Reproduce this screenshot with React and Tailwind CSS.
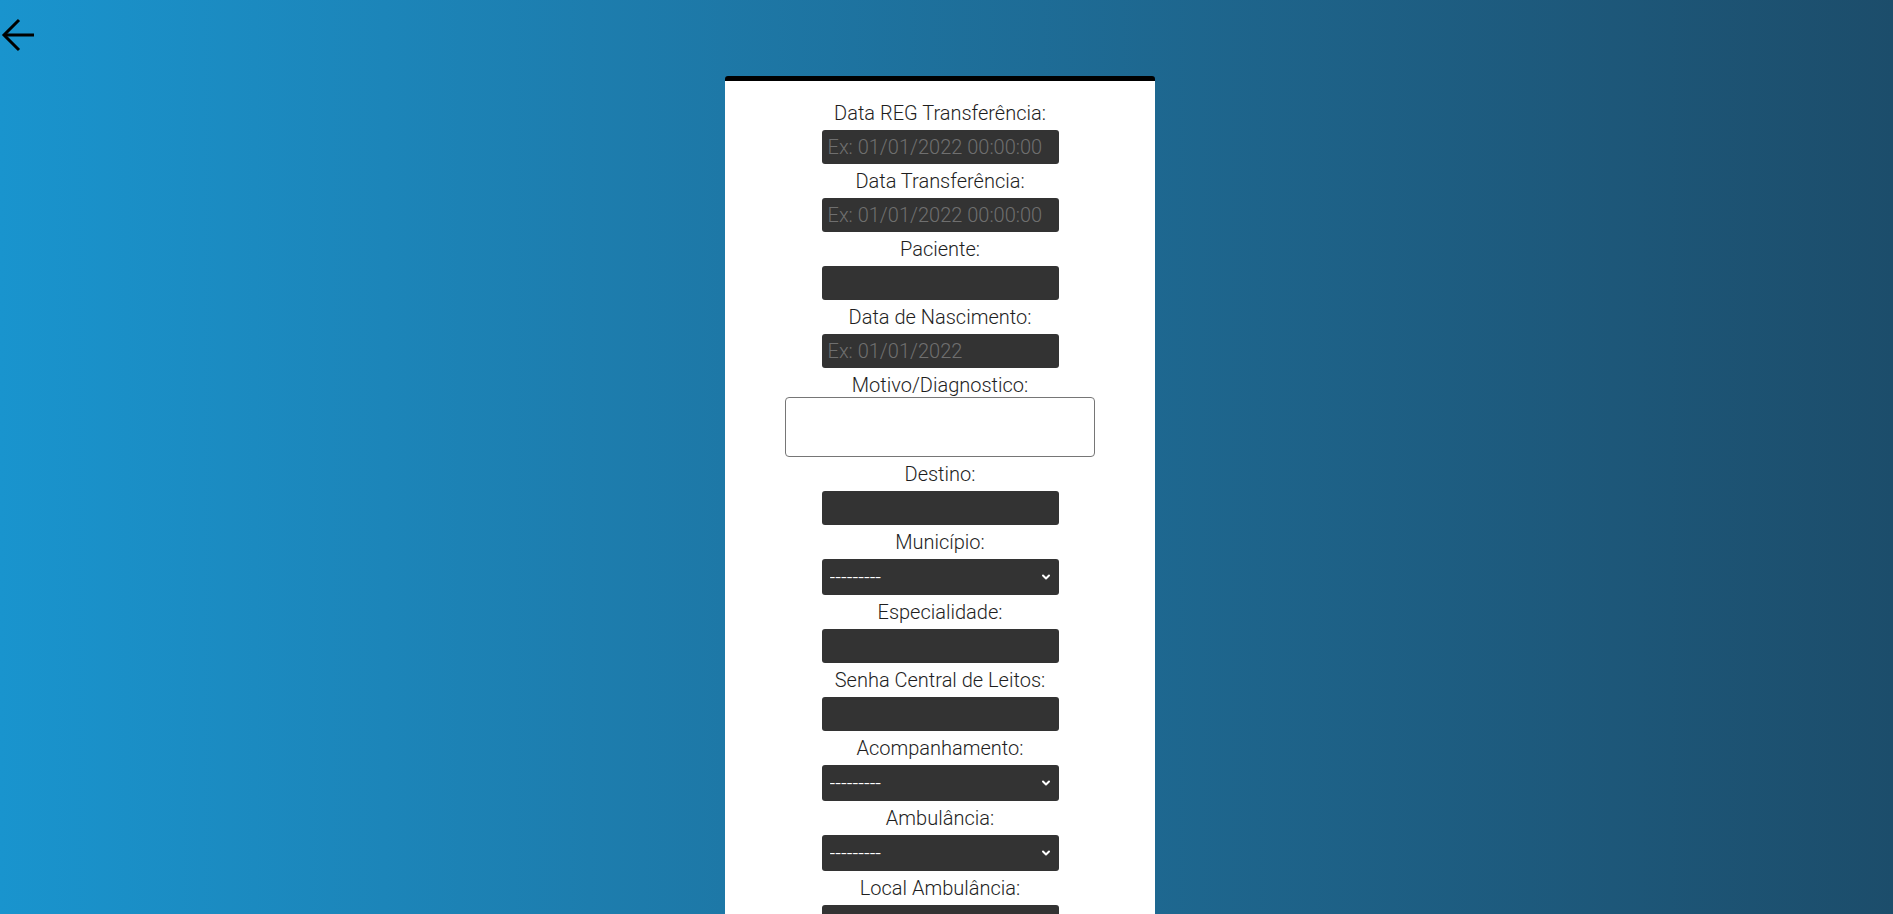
import { ChevronDown } from "lucide-react";

const fields = [
  { label: "Data REG Transferência:", type: "input", placeholder: "Ex: 01/01/2022 00:00:00" },
  { label: "Data Transferência:", type: "input", placeholder: "Ex: 01/01/2022 00:00:00" },
  { label: "Paciente:", type: "input" },
  { label: "Data de Nascimento:", type: "input", placeholder: "Ex: 01/01/2022" },
  { label: "Motivo/Diagnostico:", type: "textarea" },
  { label: "Destino:", type: "input" },
  { label: "Município:", type: "select" },
  { label: "Especialidade:", type: "input" },
  { label: "Senha Central de Leitos:", type: "input" },
  { label: "Acompanhamento:", type: "select" },
  { label: "Ambulância:", type: "select" },
  { label: "Local Ambulância:", type: "input" },
  { label: "Observação:", type: "textarea" },
];

function Field({ field }) {
  let control;
  if (field.type === "textarea") {
    control = (
      <textarea className="-mt-[5px] w-[310px] h-[60px] rounded-[4px] border border-[#767676] bg-white resize-none block" />
    );
  } else if (field.type === "select") {
    control = (
      <div className="relative w-[237px] h-[36px]">
        <select className="appearance-none w-full h-full rounded-[3px] bg-[#333333] text-white text-[20px] font-light pl-[8px] font-['Roboto',sans-serif] outline-none">
          <option>---------</option>
        </select>
        <ChevronDown
          size={12}
          strokeWidth={4}
          className="absolute right-[7px] top-[12px] text-white pointer-events-none"
        />
      </div>
    );
  } else {
    control = (
      <input
        placeholder={field.placeholder}
        className="w-[237px] h-[34px] rounded-[3px] bg-[#333333] text-white text-[20px] font-light px-[6px] placeholder:text-[#6f6f6f] outline-none block"
      />
    );
  }
  return (
    <div className="flex flex-col items-center">
      <label className="h-[34px] flex items-center text-[20px] font-light text-[#1e1e1e]">
        {field.label}
      </label>
      {control}
    </div>
  );
}

export default function App() {
  return (
    <div className="h-[914px] overflow-hidden bg-gradient-to-r from-[#1994ce] to-[#1c4d6b] font-['Roboto',sans-serif] relative">
      <button className="absolute left-0 top-[18px] w-[40px] h-[36px]" aria-label="Voltar">
        <svg width="40" height="36" viewBox="0 0 40 36" fill="none" stroke="black" strokeWidth="3">
          <path d="M4 17H34" />
          <path d="M19 2L4 17L19 32" />
        </svg>
      </button>
      <div className="flex justify-center pr-[13px] pt-[76px]">
        <div className="w-[430px] bg-white border-t-[5px] border-black rounded-t-[3px] pt-[15px] pb-10 flex flex-col items-center">
          {fields.map((f, i) => (
            <Field key={i} field={f} />
          ))}
        </div>
      </div>
    </div>
  );
}
